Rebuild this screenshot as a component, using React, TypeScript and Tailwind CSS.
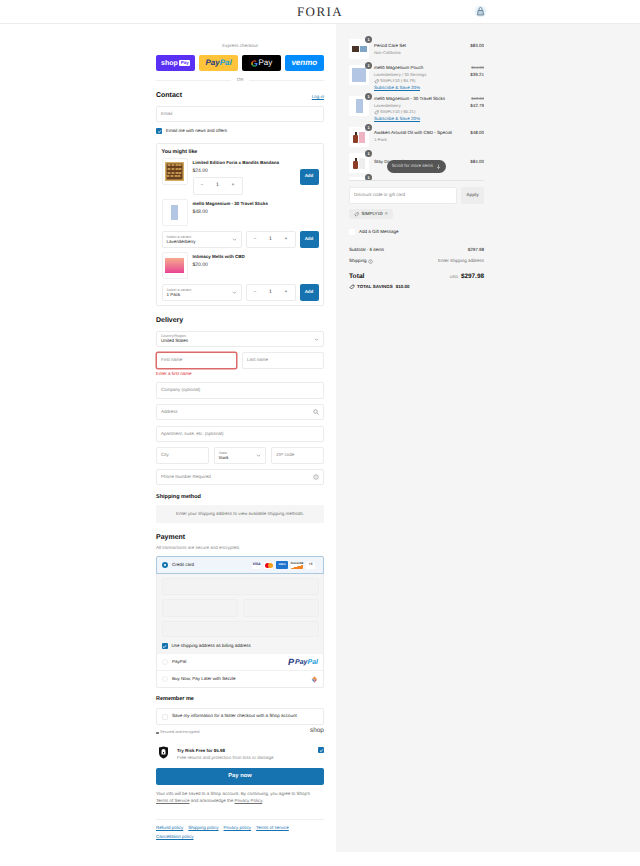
import React from "react";

const line = "border border-[#ebebeb]";

function Field({ label, top, right, className = "", error = false }: { label: string; top?: string; right?: React.ReactNode; className?: string; error?: boolean }) {
  return (
    <div className={`flex items-center justify-between rounded-[2px] bg-white px-[4px] ${error ? "border border-[#dd6a6a] ring-[0.5px] ring-[#dd6a6a]" : line} ${className}`}>
      {top ? (
        <div className="flex flex-col leading-none">
          <span className="text-[3.6px] leading-[4px] text-[#8a8a8a]">{top}</span>
          <span className="text-[4.5px] leading-[5.5px] text-[#222]">{label}</span>
        </div>
      ) : (
        <span className="text-[4.5px] text-[#858585]">{label}</span>
      )}
      {right}
    </div>
  );
}

function Chevron() {
  return (
    <svg width="5" height="5" viewBox="0 0 10 10" fill="none" stroke="#777" strokeWidth="1.2">
      <path d="M2 3.5 L5 6.5 L8 3.5" />
    </svg>
  );
}

function Check({ size = 6 }: { size?: number }) {
  return (
    <span className="flex shrink-0 items-center justify-center rounded-[1px] bg-[#1773b0]" style={{ width: size, height: size }}>
      <svg width={size - 1} height={size - 1} viewBox="0 0 10 10" fill="none" stroke="#fff" strokeWidth="1.6">
        <path d="M2 5.2 L4.2 7.3 L8 2.8" />
      </svg>
    </span>
  );
}

function Qty({ className = "" }: { className?: string }) {
  return (
    <div className={`flex items-center justify-between rounded-[2px] bg-white px-[7px] text-[5px] text-[#333] ${line} ${className}`}>
      <span className="text-[#777]">−</span>
      <span>1</span>
      <span>+</span>
    </div>
  );
}

function AddBtn({ className = "" }: { className?: string }) {
  return <div className={`flex w-[19px] items-center justify-center rounded-[2px] bg-[#1773b0] text-[4.5px] font-bold text-white ${className}`}>Add</div>;
}

function Thumb({ children, className = "" }: { children: React.ReactNode; className?: string }) {
  return <div className={`flex h-[27px] w-[26px] shrink-0 items-center justify-center rounded-[2px] border border-[#f0f0f0] bg-white ${className}`}>{children}</div>;
}

function StickBox({ w = 9, h = 14 }: { w?: number; h?: number }) {
  return <div className="bg-[#b3c6e4]" style={{ width: w, height: h }} />;
}

function Upsell({ title, price, thumb, variant }: { title: string; price: string; thumb: React.ReactNode; variant?: string }) {
  return (
    <div className="flex flex-col">
      <div className="flex gap-[5px]">
        <Thumb>{thumb}</Thumb>
        <div className="flex flex-col pt-[1px]">
          <span className="text-[4.5px] font-bold leading-[7px] text-[#222]">{title}</span>
          <span className="mt-[2px] text-[5px] leading-[7px] text-[#333]">{price}</span>
        </div>
      </div>
      {variant && (
        <div className="mt-[5px] flex h-[17px] gap-[4px]">
          <Field top="Select a variant" label={variant} right={<Chevron />} className="w-[80px]" />
          <Qty className="w-[50px]" />
          <AddBtn />
        </div>
      )}
    </div>
  );
}

function Tag() {
  return (
    <svg width="5" height="5" viewBox="0 0 10 10" fill="none" stroke="#555" strokeWidth="1">
      <path d="M1.5 5.5 L5.5 1.5 H8.5 V4.5 L4.5 8.5 Z" />
    </svg>
  );
}

function Badge({ n }: { n: number }) {
  return <span className="absolute right-[-3px] top-[-3px] flex h-[7px] w-[7px] items-center justify-center rounded-full bg-[#666] text-[4px] font-bold text-white">{n}</span>;
}

function Item({ title, sub, code, price, was, art, h, img = "items-start" }: { title: string; sub?: string; code?: string; price: string; was?: string; art: React.ReactNode; h: number; img?: string }) {
  return (
    <div className="flex shrink-0 gap-[5px]" style={{ height: h }}>
      <div className="relative flex h-[20px] w-[20px] shrink-0 items-center justify-center rounded-[2px] bg-white">
        {art}
        <Badge n={1} />
      </div>
      <div className={`flex h-[26px] flex-1 justify-between ${img}`}>
        <div className="flex flex-col">
          <span className="text-[4.5px] leading-[6.5px] text-[#222]">{title}</span>
          {sub && <span className="text-[4.16px] leading-[6.5px] text-[#8a8a8a]">{sub}</span>}
          {code && (
            <span className="flex items-center gap-[1px] text-[4.16px] leading-[6.5px] text-[#8a8a8a]">
              <Tag />
              {code}
            </span>
          )}
          {code && <span className="text-[4.5px] leading-[6.5px] text-[#1773b0] underline">Subscribe &amp; Save 20%</span>}
        </div>
        <div className="flex flex-col items-end">
          {was && <span className="text-[4.16px] leading-[6.5px] text-[#8a8a8a] line-through">{was}</span>}
          <span className="text-[4.5px] leading-[6.5px] text-[#222]">{price}</span>
        </div>
      </div>
    </div>
  );
}

function Bottle({ second = "bg-[#eeb4c4]" }: { second?: string }) {
  return (
    <div className="flex items-end gap-[1px]">
      <div className="flex flex-col items-center">
        <div className="h-[3px] w-[2px] bg-[#3a2a22]" />
        <div className="h-[8px] w-[5px] rounded-[1px] bg-[#8c3d26]" />
      </div>
      <div className={`h-[11px] w-[6px] ${second}`} />
    </div>
  );
}

export default function App() {
  return (
    <div className="h-[866px] w-[640px] overflow-hidden bg-white font-['Liberation_Sans',Arial,sans-serif] text-[#222] [text-rendering:geometricPrecision]">
      <header className="flex h-[24px] items-center justify-center border-b border-[#ececec]">
        <div className="relative flex w-full items-center justify-center">
          <span className="font-['Liberation_Serif',serif] text-[13px] font-normal leading-none tracking-[1.4px] text-[#333]">FORIA</span>
          <svg className="absolute left-[474px] top-[0px]" width="13" height="13" viewBox="0 0 26 26">
            <circle cx="13" cy="13" r="12" fill="#eaf3f9" />
            <path d="M8 11 H18 L19 20 H7 Z" fill="#bcd0de" stroke="#4d6f86" strokeWidth="1.500" />
            <path d="M10 11 V8 a3 3 0 0 1 6 0 V11" fill="none" stroke="#4d6f86" strokeWidth="1.500" />
          </svg>
        </div>
      </header>
      <main className="flex h-[828px]">
        <section className="flex w-[336px] shrink-0 flex-col pl-[156px] pr-[12px]">
          <div className="mt-[19px] h-[6px] text-center text-[4.5px] leading-[6px] text-[#8a8a8a]">Express checkout</div>
          <div className="mt-[6px] flex h-[16px] gap-[3.5px]">
            <div className="flex flex-1 items-center justify-center gap-[1.5px] rounded-[2px] bg-[#5a31f4] text-white">
              <span className="text-[7px] font-bold leading-none">shop</span>
              <span className="rounded-[1px] bg-white px-[1.5px] text-[4.5px] font-bold leading-[5.5px] text-[#5a31f4]">Pay</span>
            </div>
            <div className="flex flex-1 items-center justify-center rounded-[2px] bg-[#ffc439] text-[8px] font-bold italic leading-none">
              <span className="text-[#253b80]">Pay</span>
              <span className="text-[#179bd7]">Pal</span>
            </div>
            <div className="flex flex-1 items-center justify-center gap-[1px] rounded-[2px] bg-black text-[8px] leading-none text-white">
              <svg width="7" height="7" viewBox="0 0 24 24">
                <path fill="#4285F4" d="M22.5 12.2c0-.8-.1-1.500-.2-2.200H12v4.200h5.900a5 5 0 0 1-2.200 3.300v2.700h3.500c2.100-1.900 3.300-4.700 3.300-8z" />
                <path fill="#34A853" d="M12 23c3 0 5.400-1 7.200-2.700l-3.500-2.700c-1 .7-2.200 1-3.700 1-2.800 0-5.200-1.900-6.100-4.500H2.300v2.800A11 11 0 0 0 12 23z" />
                <path fill="#FBBC05" d="M5.900 14.100a6.600 6.600 0 0 1 0-4.200V7.100H2.300a11 11 0 0 0 0 9.800z" />
                <path fill="#EA4335" d="M12 5.400c1.600 0 3 .5 4.100 1.600l3.100-3.100A11 11 0 0 0 2.300 7.100l3.600 2.800C6.800 7.300 9.200 5.400 12 5.400z" />
              </svg>
              <span>Pay</span>
            </div>
            <div className="flex flex-1 items-center justify-center rounded-[2px] bg-[#008cff] text-[8px] font-bold italic leading-none text-white">venmo</div>
          </div>
          <div className="mt-[6px] flex h-[6px] items-center gap-[6px]">
            <div className="h-px flex-1 bg-[#efefef]" />
            <span className="text-[4.5px] leading-[6px] text-[#8a8a8a]">OR</span>
            <div className="h-px flex-1 bg-[#efefef]" />
          </div>
          <div className="mt-[8px] flex h-[10px] items-center justify-between">
            <h2 className="text-[7px] font-bold leading-[10px] text-[#111]">Contact</h2>
            <span className="pt-[2px] text-[4.5px] text-[#1773b0] underline">Log in</span>
          </div>
          <Field label="Email" className="mt-[5px] h-[16px]" />
          <div className="mt-[6px] flex h-[6px] items-center gap-[4px]">
            <Check />
            <span className="text-[4.5px] leading-[6px]">Email me with news and offers</span>
          </div>
          <div className={`mt-[9px] flex h-[163px] flex-col rounded-[2px] px-[4.500px] pt-[5px] ${line}`}>
            <h3 className="text-[5.300px] font-bold leading-[6px] text-[#111]">You might like</h3>
            <div className="mt-[3px]">
              <div className="flex gap-[5px]">
                <Thumb>
                  <svg width="19" height="19" viewBox="0 0 19 19">
                    <rect width="19" height="19" fill="#d3ac62" />
                    <rect x="1.500" y="1.500" width="16" height="16" fill="#6a3f1d" />
                    {[3, 7, 11, 14].map((y) =>
                      [3, 7, 11, 14].map((x) => <ellipse key={`${x}-${y}`} cx={x + (y % 2)} cy={y} rx="1.700" ry="1" fill="#c99b52" />)
                    )}
                  </svg>
                </Thumb>
                <div className="flex flex-1 items-center">
                  <div className="flex flex-1 flex-col pt-[1px]">
                    <span className="text-[4.500px] font-bold leading-[7px] text-[#222]">Limited Edition Foria x Bandits Bandana</span>
                    <span className="mt-[2px] text-[5px] leading-[7px] text-[#333]">$24.00</span>
                    <Qty className="mt-[2px] h-[18px] w-[50px]" />
                  </div>
                  <AddBtn className="h-[16px]" />
                </div>
              </div>
            </div>
            <div className="mt-[4px]">
              <Upsell title="mellō Magnesium - 30 Travel Sticks" price="$48.00" variant="Lavenderberry" thumb={<StickBox w={7} h={15} />} />
            </div>
            <div className="mt-[4px]">
              <Upsell title="Intimacy Melts with CBD" price="$20.00" variant="1 Pack" thumb={<div className="h-[15px] w-[19px] bg-gradient-to-b from-[#f3a98c] to-[#e83f93]" />} />
            </div>
          </div>
          <h2 className="mt-[10px] text-[7px] font-bold leading-[10px] text-[#111]">Delivery</h2>
          <Field top="Country/Region" label="United States" right={<Chevron />} className="mt-[5px] h-[16px]" />
          <div className="mt-[5px] flex h-[17px] gap-[5px]">
            <Field label="First name" error className="w-[81px]" />
            <Field label="Last name" className="flex-1" />
          </div>
          <div className="mt-[2px] h-[6px] text-[4.500px] leading-[6px] text-[#dd1d1d]">Enter a first name</div>
          <Field label="Company (optional)" className="mt-[5px] h-[17px]" />
          <Field
            label="Address"
            className="mt-[5px] h-[16px]"
            right={
              <svg width="6" height="6" viewBox="0 0 12 12" fill="none" stroke="#707070" strokeWidth="1.100">
                <circle cx="5" cy="5" r="3.500" />
                <path d="M8 8 L11 11" />
              </svg>
            }
          />
          <Field label="Apartment, suite, etc. (optional)" className="mt-[6px] h-[16px]" />
          <div className="mt-[5px] flex h-[17px] gap-[5px]">
            <Field label="City" className="flex-1" />
            <Field top="State" label="Iowa" right={<Chevron />} className="flex-1" />
            <Field label="ZIP code" className="flex-1" />
          </div>
          <Field
            label="Phone Number Required"
            className="mt-[5px] h-[16px]"
            right={
              <svg width="6" height="6" viewBox="0 0 12 12" fill="none" stroke="#707070" strokeWidth="1">
                <circle cx="6" cy="6" r="4.500" />
                <path d="M6 3.500 V6.500 M6 8 V8.800" />
              </svg>
            }
          />
          <h3 className="mt-[9px] text-[5.500px] font-bold leading-[7px] text-[#111]">Shipping method</h3>
          <div className="mt-[4px] flex h-[18px] items-center justify-center rounded-[2px] bg-[#f5f5f5] text-[4.500px] text-[#707070]">Enter your shipping address to view available shipping methods.</div>
          <h2 className="mt-[10px] text-[7px] font-bold leading-[10px] text-[#111]">Payment</h2>
          <div className="mt-[2px] h-[6px] text-[4.500px] leading-[6px] text-[#8a8a8a]">All transactions are secure and encrypted.</div>
          <div className="mt-[5px] flex flex-col rounded-[2px] border border-[#ebebeb]">
            <div className="-mx-px -mt-px flex h-[18px] items-center justify-between rounded-t-[2px] border border-[#a9c7df] bg-[#f0f5fb] pl-[5px] pr-[8px]">
              <div className="flex items-center gap-[4px]">
                <span className="flex h-[6px] w-[6px] items-center justify-center rounded-full bg-[#1773b0]">
                  <span className="h-[2px] w-[2px] rounded-full bg-white" />
                </span>
                <span className="text-[4.500px]">Credit card</span>
              </div>
              <div className="flex items-center gap-[3px]">
                <span className="flex h-[7px] w-[9px] items-center justify-center rounded-[1px] bg-white text-[3.500px] font-bold italic text-[#1a1f71]">VISA</span>
                <span className="flex h-[7px] w-[9px] items-center justify-center rounded-[1px] bg-white">
                  <span className="h-[5px] w-[5px] rounded-full bg-[#eb001b]" />
                  <span className="-ml-[2px] h-[5px] w-[5px] rounded-full bg-[#f79e1b]" />
                </span>
                <span className="flex h-[8px] w-[12px] items-center justify-center rounded-[1px] bg-[#1f72cd] text-[2.500px] font-bold text-white">AMEX</span>
                <span className="flex h-[7px] w-[12px] items-start justify-center rounded-[1px] bg-[linear-gradient(165deg,#fff_60%,#f58220_62%)] text-[2.400px] font-bold leading-[4px] text-[#222]">DISCOVER</span>
                <span className="flex h-[7px] w-[9px] items-center justify-center rounded-[1px] bg-white text-[3.500px] font-bold text-[#444]">+4</span>
              </div>
            </div>
            <div className="flex h-[80px] flex-col gap-[4px] bg-[#f5f5f5] px-[4.500px] pt-[4px]">
              <div className="h-[17px] rounded-[2px] border border-[#eeeeee] bg-[#f3f3f3]" />
              <div className="flex h-[18px] gap-[5px]">
                <div className="flex-1 rounded-[2px] border border-[#eeeeee] bg-[#f3f3f3]" />
                <div className="flex-1 rounded-[2px] border border-[#eeeeee] bg-[#f3f3f3]" />
              </div>
              <div className="h-[16px] rounded-[2px] border border-[#eeeeee] bg-[#f3f3f3]" />
              <div className="mt-[2px] flex h-[6px] items-center gap-[4px]">
                <Check />
                <span className="text-[4.500px] leading-[6px]">Use shipping address as billing address</span>
              </div>
            </div>
            <div className="flex h-[17px] items-center justify-between border-b border-[#f0f0f0] px-[5px]">
              <div className="flex items-center gap-[4px]">
                <span className="h-[6px] w-[6px] rounded-full border border-[#eeeeee]" />
                <span className="text-[4.500px]">PayPal</span>
              </div>
              <span className="flex items-center gap-[1px] text-[7px] font-bold italic leading-none">
                <span className="text-[9px] leading-none text-[#253b80]">P</span>
                <span className="text-[#253b80]">Pay</span>
                <span className="-ml-[1px] text-[#179bd7]">Pal</span>
              </span>
            </div>
            <div className="flex h-[16px] items-center justify-between px-[5px]">
              <div className="flex items-center gap-[4px]">
                <span className="h-[6px] w-[6px] rounded-full border border-[#eeeeee]" />
                <span className="text-[4.500px]">Buy Now, Pay Later with Sezzle</span>
              </div>
              <svg width="7" height="7" viewBox="0 0 10 10">
                <path d="M5 0.500 L9 5 H1 Z" fill="#e88f45" />
                <path d="M1 5 H5 V9.500 Z" fill="#4a7fc4" />
                <path d="M9 5 H5 V9.500 Z" fill="#d96a6a" />
              </svg>
            </div>
          </div>
          <h3 className="mt-[8px] text-[5.500px] font-bold leading-[7px] text-[#111]">Remember me</h3>
          <div className={`mt-[5px] flex h-[17px] items-center gap-[4px] rounded-[2px] px-[5px] ${line}`}>
            <span className={`h-[6px] w-[6px] rounded-[1px] ${line}`} />
            <span className="text-[4.500px]">Save my information for a faster checkout with a Shop account</span>
          </div>
          <div className="mt-[3px] flex h-[8px] items-center justify-between">
            <span className="flex items-center gap-[1.500px] pt-[2px] text-[3.800px] text-[#8a8a8a]">
              <span className="h-[2.500px] w-[2.500px] rounded-[0.500px] bg-[#777]" />
              Secured and encrypted
            </span>
            <span className="pb-[2px] text-[6.500px] leading-none text-[#444]">shop</span>
          </div>
          <div className="mt-[9px] flex h-[16px] items-start">
            <svg className="ml-[2px] mr-[8px] mt-[1px]" width="11" height="13" viewBox="0 0 22 26">
              <path d="M2 3 L11 1 L20 3 V14 C20 20 15 24 11 25 C7 24 2 20 2 14 Z" fill="#111" />
              <circle cx="11" cy="10" r="4" fill="#fff" />
              <rect x="7" y="11" width="8" height="6" rx="1" fill="#fff" />
              <rect x="10" y="12" width="2" height="3" fill="#111" />
            </svg>
            <div className="flex flex-1 flex-col pt-[2px]">
              <span className="text-[4.500px] font-bold leading-[7px] text-[#222]">Try Risk Free for $5.98</span>
              <span className="text-[4.500px] leading-[7px] text-[#8a8a8a]">Free returns and protection from loss or damage</span>
            </div>
            <div className="mt-[2px]">
              <Check />
            </div>
          </div>
          <div className="mt-[7px] flex h-[17px] items-center justify-center rounded-[2px] bg-[#1773b0] text-[5.800px] font-bold text-white">Pay now</div>
          <p className="mt-[5px] text-[4.500px] leading-[7px] text-[#707070]">
            Your info will be saved to a Shop account. By continuing, you agree to Shop's
            <br />
            <span className="underline">Terms of Service</span> and acknowledge the <span className="underline">Privacy Policy</span>.
          </p>
          <div className="mt-[15px] border-t border-[#efefef] pt-[4px]">
            <div className="flex flex-wrap gap-x-[5px] gap-y-[2px] text-[4.500px] leading-[7px] text-[#1773b0] underline">
              <span>Refund policy</span>
              <span>Shipping policy</span>
              <span>Privacy policy</span>
              <span>Terms of service</span>
              <span className="w-full">Cancellation policy</span>
            </div>
          </div>
        </section>
        <aside className="flex flex-1 flex-col bg-[#f5f5f5] pl-[13px] pr-[156px]">
          <div className="relative mt-[15px] h-[142px] flex-none border-b border-[#e3e3e3]">
            <div className="flex h-[141px] flex-col overflow-hidden pt-[3px] -mt-[3px] box-content">
              <Item h={26} img="items-start pt-[4px]" title="Period Care Set" sub="Non-California" price="$83.00" art={<div className="flex gap-[1px]"><div className="h-[6px] w-[7px] bg-[#4a3328]" /><div className="h-[6px] w-[7px] bg-[#7fa6c6]" /></div>} />
              <Item h={31} title="mellō Magnesium Pouch" sub="Lavenderberry / 30 Servings" code="SIMPLY10 (-$4.79)" was="$44.00" price="$39.21" art={<StickBox w={14} h={14} />} />
              <Item h={31} title="mellō Magnesium - 30 Travel Sticks" sub="Lavenderberry" code="SIMPLY10 (-$5.21)" was="$48.00" price="$42.79" art={<StickBox w={7} h={14} />} />
              <Item h={26} img="items-start pt-[3px]" title="Awaken Arousal Oil with CBD - Special" sub="1-Pack" price="$48.00" art={<Bottle />} />
              <Item h={24} img="items-start pt-[6px]" title="Stay Dry Bundle" price="$84.00" art={<Bottle second="bg-[#eeeeee]" />} />
              <div className="relative h-[20px] w-[20px] shrink-0 rounded-[2px] bg-white"><Badge n={1} /></div>
            </div>
            <div className="absolute left-[38px] top-[121px] flex h-[13px] w-[59px] items-center justify-center gap-[3px] rounded-full bg-[#555] text-[4.500px] text-[#ddd]">
              Scroll for more items
              <svg width="5" height="5" viewBox="0 0 10 10" fill="none" stroke="#ddd" strokeWidth="1.200">
                <path d="M5 1 V9 M2 6 L5 9 L8 6" />
              </svg>
            </div>
          </div>
          <div className="mt-[6px] flex h-[17px] gap-[4px]">
            <Field label="Discount code or gift card" className="flex-1" />
            <div className="flex w-[23px] items-center justify-center rounded-[2px] bg-[#ededed] text-[4.500px] font-bold text-[#808080]">Apply</div>
          </div>
          <div className="mt-[5px] flex h-[10px] w-[44px] items-center justify-center gap-[2px] rounded-[2px] bg-[#ececec] text-[4.500px]">
            <Tag />
            SIMPLY10
            <span className="text-[5px] leading-none text-[#666]">×</span>
          </div>
          <div className="mt-[10px] flex h-[6px] items-center gap-[4px]">
            <span className="h-[6px] w-[6px] rounded-[1px] bg-white" />
            <span className="text-[4.500px] leading-[6px]">Add a Gift Message</span>
          </div>
          <div className="mt-[12px] flex h-[6px] items-center justify-between text-[4.500px] leading-[6px]">
            <span>Subtotal · 6 items</span>
            <span>$297.98</span>
          </div>
          <div className="mt-[5px] flex h-[6px] items-center justify-between text-[4.500px] leading-[6px]">
            <span className="flex items-center gap-[1.500px]">
              Shipping
              <svg width="5" height="5" viewBox="0 0 12 12" fill="none" stroke="#555" strokeWidth="1">
                <circle cx="6" cy="6" r="4.500" />
                <path d="M6 3.500 V6.500 M6 8 V8.800" />
              </svg>
            </span>
            <span className="text-[#707070]">Enter shipping address</span>
          </div>
          <div className="mt-[8px] flex h-[9px] items-center justify-between">
            <span className="text-[6.700px] font-bold leading-[9px] text-[#111]">Total</span>
            <span className="flex items-baseline gap-[3px]">
              <span className="text-[3.800px] text-[#707070]">USD</span>
              <span className="text-[6.400px] font-bold leading-[9px] text-[#111]">$297.98</span>
            </span>
          </div>
          <div className="mt-[3px] flex h-[6px] items-center gap-[2px] text-[4.500px] font-bold leading-[6px]">
            <svg width="6" height="6" viewBox="0 0 12 12" fill="none" stroke="#111" strokeWidth="1.300">
              <path d="M2 7 L7 2 H10 V5 L5 10 Z" />
            </svg>
            TOTAL SAVINGS
            <span className="ml-[1px]">$10.00</span>
          </div>
        </aside>
      </main>
    </div>
  );
}
